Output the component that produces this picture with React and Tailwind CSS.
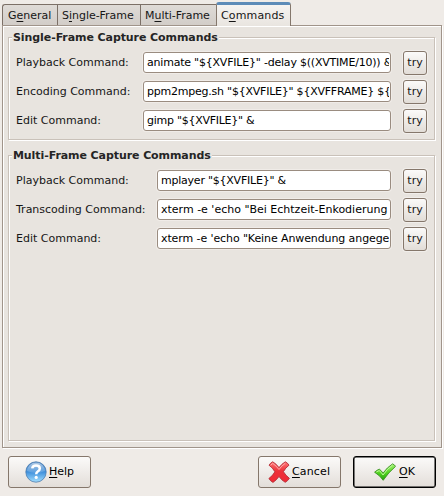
const tabs = [
  { text: ['G', 'e', 'neral'], box: 'w-[55px] rounded-tl-[3px] border-l pl-[5px]', sp: 'tracking-normal' },
  { text: ['S', 'i', 'ngle-Frame'], box: 'w-[83px] border-l pl-[4px]', sp: 'tracking-[-0.03px]' },
  { text: ['M', 'u', 'lti-Frame'], box: 'w-[76px] border-l pl-[4px]', sp: 'tracking-[-0.03px]' },
];

const single = [
  ['Playback Command:', 'animate "${XVFILE}" -delay $((XVTIME/10)) &', 'tracking-[-0.21px]'],
  ['Encoding Command:', 'ppm2mpeg.sh "${XVFILE}" ${XVFFRAME} ${', 'tracking-[-0.23px]'],
  ['Edit Command:', 'gimp "${XVFILE}" &', 'tracking-[-0.27px]'],
];

const multi = [
  ['Playback Command:', 'mplayer "${XVFILE}" &', 'tracking-[-0.23px]'],
  ['Transcoding Command:', "xterm -e 'echo \"Bei Echtzeit-Enkodierung", 'tracking-normal'],
  ['Edit Command:', "xterm -e 'echo \"Keine Anwendung angege", 'tracking-[-0.1px]'],
];

function Mnemonic({ parts }) {
  return (
    <span className="whitespace-pre">
      {parts[0]}
      <span className="underline decoration-1 underline-offset-2">{parts[1]}</span>
      {parts[2]}
    </span>
  );
}

function Group({ title, rows, labelWidth, className }) {
  return (
    <section className={`border border-[#c9c1b9] shadow-[1px_1px_0_#fff,inset_1px_1px_0_#fff] ${className}`}>
      <h2 className="-mt-[9px] ml-[3px] h-[17px] w-fit bg-[#e8e4df] px-px text-[11px] leading-[17px] font-bold tracking-[-0.08px] whitespace-nowrap text-[#252525]">
        {title}
      </h2>
      <div className="mt-[5px] flex flex-col gap-[6px] pl-[7px]">
        {rows.map(([label, value, spacing]) => (
          <div key={label} className="flex h-[23px] items-center">
            <span className={`shrink-0 whitespace-nowrap ${labelWidth}`}>{label}</span>
            <div className="flex h-[21px] flex-1 items-center rounded-[3px] border border-[#9a8c80] bg-white pr-px pl-[3px] shadow-[0_0_0_1px_#f0ece8]">
              <span className={`w-0 flex-1 overflow-hidden whitespace-pre text-black ${spacing}`}>{value}</span>
            </div>
            <button className="mr-[7px] ml-[12px] h-[24px] w-[24px] shrink-0 rounded-[3px] border border-[#85776b] bg-linear-to-b from-[#fbfaf9] to-[#e2ddd7] text-center shadow-[0_0_0_1px_#f1eeeb]">
              try
            </button>
          </div>
        ))}
      </div>
    </section>
  );
}

function HelpIcon() {
  return (
    <svg width="22" height="22" viewBox="0 0 22 22" className="shrink-0">
      <defs>
        <linearGradient id="help" x1="0" y1="0" x2="0" y2="1">
          <stop offset="0" stopColor="#3475bb" />
          <stop offset=".5" stopColor="#3f90dc" />
          <stop offset="1" stopColor="#a4e0ff" />
        </linearGradient>
        <linearGradient id="gloss" x1="0" y1="0" x2="0" y2="1">
          <stop offset="0" stopColor="#fff" stopOpacity=".6" />
          <stop offset="1" stopColor="#fff" stopOpacity=".12" />
        </linearGradient>
      </defs>
      <circle cx="11" cy="11" r="10.2" fill="url(#help)" stroke="#4c7cae" strokeWidth=".8" />
      <path d="M2 10a9 8.5 0 0 1 18 0q-9 4-18 0z" fill="url(#gloss)" />
      <path d="M7.2 7.4Q7.6 4.6 11 4.6q3.8 0 3.8 2.9 0 1.6-1.8 2.8-1.8 1.2-1.8 3" fill="none" stroke="#fff" strokeWidth="2.5" />
      <circle cx="11.2" cy="16.4" r="1.6" fill="#fff" />
    </svg>
  );
}

function CancelIcon() {
  return (
    <svg width="22" height="22" viewBox="0 0 22 22" className="shrink-0">
      <defs>
        <linearGradient id="cross" x1="0" y1="0" x2="0" y2="1">
          <stop offset="0" stopColor="#ff7777" />
          <stop offset=".45" stopColor="#ed3139" />
          <stop offset="1" stopColor="#f02a35" />
        </linearGradient>
      </defs>
      <path
        d="M1 4.2Q2.5 1.8 4.7.8 8 2.5 11 6.6 13.6 3 17.3.8q2.3 1 3.7 3.4-3.6 2.6-5.6 6.5 2.4 4 6 6.6-1.6 2.6-4.2 4-3.5-2-6.2-5.8-2.7 3.8-6 5.9-2.6-1.3-4.1-3.9 3.8-2.6 6-6.7Q4.8 6.700 1 4.200z"
        fill="url(#cross)" stroke="#b3303a" strokeWidth=".9" strokeLinejoin="round"
      />
      <path d="M2.700 4.300l2-1.900Q8.300 4.800 11 8.500 13.500 4.800 17.200 2.400" fill="none" stroke="#ffaaaa" strokeWidth="1" />
    </svg>
  );
}

function OkIcon() {
  return (
    <svg width="22" height="22" viewBox="0 0 22 22" className="shrink-0">
      <defs>
        <linearGradient id="check" x1="0" y1="0" x2="0" y2="1">
          <stop offset="0" stopColor="#a5f375" />
          <stop offset=".55" stopColor="#52d420" />
          <stop offset="1" stopColor="#239f0c" />
        </linearGradient>
      </defs>
      <path
        d="M.6 11.200Q2.800 9 5.300 8.200 7.300 9.400 9 12.200 13 6.400 18.500 2.900q2.100.7 3 2.500Q14.500 11.300 9.200 19.300 5.800 14.300.6 11.200z"
        fill="url(#check)" stroke="#3b9222" strokeWidth=".9" strokeLinejoin="round"
      />
      <path d="M2.400 11l2.700-1.400Q7.300 11 9 14 13 8 18.400 4.300" fill="none" stroke="#c9fba9" strokeWidth=".9" />
    </svg>
  );
}

function DialogButton({ icon, parts, className }) {
  return (
    <button className={`flex h-[32px] w-[83px] items-center rounded-[3px] border bg-linear-to-b from-[#fbfaf9] to-[#e3ded9] text-black ${className}`}>
      {icon}
      <span className="-mt-[2px]">
        <Mnemonic parts={parts} />
      </span>
    </button>
  );
}

export default function App() {
  return (
    <main className="flex h-[496px] w-[444px] flex-col overflow-hidden bg-[#efebe7] font-['DejaVu_Sans',sans-serif] text-[11px] leading-[15px] text-[#161616]">
      <nav className="z-10 flex h-[26px] shrink-0 items-end pl-[2px]">
        {tabs.map((t) => (
          <div key={t.text.join('')} className={`mb-px flex h-[21px] items-center border-t border-[#7c7067] bg-linear-to-b from-[#dfdbd7] to-[#d2cdc8] ${t.box} ${t.sp}`}>
            <Mnemonic parts={t.text} />
          </div>
        ))}
        <div className="flex h-[24px] w-[75px] items-center rounded-t-[3px] border-x border-t-[3px] border-x-[#84776c] border-t-[#5c8bb8] bg-linear-to-b from-[#f5f3f1] to-[#e9e5e0] pb-px pl-[4px] tracking-[0.15px]">
          <Mnemonic parts={['C', 'o', 'mmands']} />
        </div>
      </nav>
      <div className="-mt-px ml-[2px] flex h-[423px] w-[440px] shrink-0 flex-col border border-[#a0948a] bg-[#e8e4df] pt-[11px] pl-[5px] shadow-[1px_1px_0_#fff,inset_1px_1px_0_#fff]">
        <Group title="Single-Frame Capture Commands" rows={single} labelWidth="w-[127px]" className="h-[103px] w-[427px]" />
        <Group title="Multi-Frame Capture Commands" rows={multi} labelWidth="w-[141px]" className="mt-[15px] h-[286px] w-[427px]" />
      </div>
      <footer className="mt-[8px] flex pl-[8px]">
        <DialogButton icon={<HelpIcon />} parts={['', 'H', 'elp']} className="gap-[2px] border-[#85776b] pl-[16px]" />
        <DialogButton icon={<CancelIcon />} parts={['', 'C', 'ancel']} className="ml-[167px] gap-[2px] border-[#85776b] pl-[9px] tracking-[0.15px]" />
        <DialogButton icon={<OkIcon />} parts={['', 'O', 'K']} className="ml-[12px] gap-[3px] border-black pl-[20px] shadow-[inset_0_0_0_0.5px_#000]" />
      </footer>
    </main>
  );
}
